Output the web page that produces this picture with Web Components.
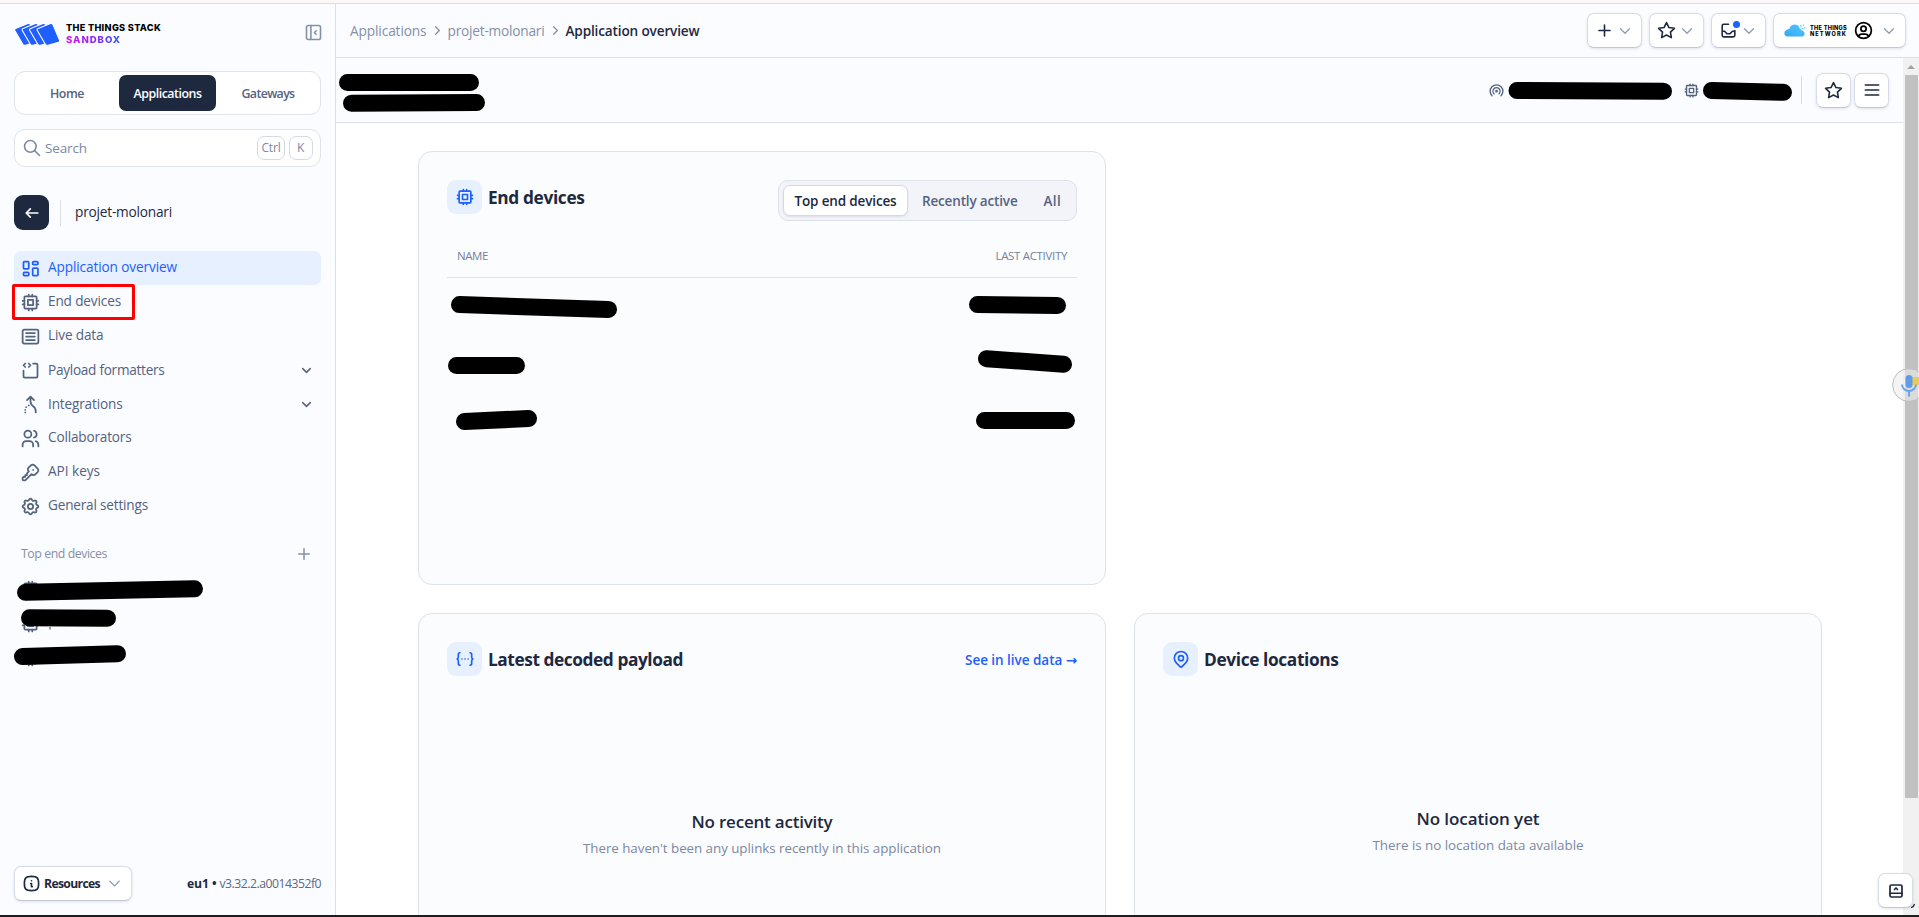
<!DOCTYPE html>
<html lang="en">
<head>
<meta charset="utf-8">
<title>Application overview - The Things Stack</title>
<style>
html,body{margin:0;height:100%;overflow:hidden}
body{font-family:"Open Sans","Noto Sans",sans-serif;color:#1e293f}
</style>
</head>
<body>
<console-app></console-app>
<script>
const define = (name, css, html, setup) => customElements.define(name, class extends HTMLElement {
  connectedCallback() {
    if (this.shadowRoot) return;
    const t = document.createElement('template');
    t.innerHTML = `<style>*{box-sizing:border-box}${css}</style>${typeof html === 'function' ? html(this) : html}`;
    this.attachShadow({ mode: 'open' }).append(t.content.cloneNode(true));
    if (setup) setup(this);
  }
});

const ICONS = {
  cpu: '<rect x="5" y="5" width="14" height="14" rx="1"/><path d="M9 9h6v6h-6zM3 10h2M3 14h2M10 3v2M14 3v2M21 10h-2M21 14h-2M14 21v-2M10 21v-2"/>',
  dashboard: '<rect x="4" y="4" width="6" height="8.500" rx="1"/><rect x="4" y="16.500" width="6" height="3.500" rx="1"/><rect x="14.500" y="11.500" width="6" height="8.500" rx="1"/><rect x="14.500" y="4" width="6" height="3.500" rx="1"/>',
  article: '<rect x="3" y="4" width="18" height="16" rx="2"/><path d="M7 8h10M7 12h10M7 16h10"/>',
  source: '<path d="M15 4h3.500a1.500 1.500 0 0 1 1.500 1.500v13a1.500 1.500 0 0 1 -1.500 1.500h-13a1.500 1.500 0 0 1 -1.500 -1.500v-6.500M6 4l-2 2l2 2M10 8l2 -2l-2 -2"/>',
  merge: '<g transform="matrix(-1 0 0 1 24 0)"><path d="M8 7l4 -4l4 4M18 21v.01M18 18.010v.01M17 15.020v.01M14 13.030v.01M12 3v5.394a6.737 6.737 0 0 1 -3 5.606a6.737 6.737 0 0 0 -3 5.606v1.394"/></g>',
  users: '<circle cx="9" cy="7" r="4"/><path d="M3 21v-2a4 4 0 0 1 4 -4h4a4 4 0 0 1 4 4v2M16 3.130a4 4 0 0 1 0 7.750M21 21v-2a4 4 0 0 0 -3 -3.850"/>',
  key: '<path d="M16.555 3.843l3.602 3.602a2.877 2.877 0 0 1 0 4.069l-2.643 2.643a2.877 2.877 0 0 1 -4.069 0l-.301 -.301l-6.558 6.558a2 2 0 0 1 -1.239 .578h-1.347a1 1 0 0 1 -1 -1v-1.172a2 2 0 0 1 .586 -1.414l.414 -.414h2v-2h2v-2l2.144 -2.144l-.301 -.301a2.877 2.877 0 0 1 0 -4.069l2.643 -2.643a2.877 2.877 0 0 1 4.069 0zM15 9h.01"/>',
  settings: '<path d="M10.325 4.317c.426 -1.756 2.924 -1.756 3.350 0a1.724 1.724 0 0 0 2.573 1.066c1.543 -.94 3.310 .826 2.370 2.370a1.724 1.724 0 0 0 1.065 2.572c1.756 .426 1.756 2.924 0 3.350a1.724 1.724 0 0 0 -1.066 2.573c.94 1.543 -.826 3.310 -2.370 2.370a1.724 1.724 0 0 0 -2.572 1.065c-.426 1.756 -2.924 1.756 -3.350 0a1.724 1.724 0 0 0 -2.573 -1.066c-1.543 .94 -3.310 -.826 -2.370 -2.370a1.724 1.724 0 0 0 -1.065 -2.572c-1.756 -.426 -1.756 -2.924 0 -3.350a1.724 1.724 0 0 0 1.066 -2.573c-.94 -1.543 .826 -3.310 2.370 -2.370c1 .608 2.296 .07 2.572 -1.065z"/><circle cx="12" cy="12" r="3"/>',
  star: '<path d="M12 17.750l-6.172 3.245l1.179 -6.873l-5 -4.867l6.900 -1l3.086 -6.253l3.086 6.253l6.900 1l-5 4.867l1.179 6.873z"/>',
  inbox: '<path d="M12 4h-6a2 2 0 0 0 -2 2v12a2 2 0 0 0 2 2h12a2 2 0 0 0 2 -2v-6M4 13h3l3 3h4l3 -3h3"/>',
  broadcast: '<path d="M18.364 19.364a9 9 0 1 0 -12.728 0M15.536 16.536a5 5 0 1 0 -7.072 0"/><circle cx="12" cy="13" r="1"/>',
  user: '<circle cx="12" cy="12" r="9"/><circle cx="12" cy="10" r="3"/><path d="M6.168 18.849a4 4 0 0 1 3.832 -2.849h4a4 4 0 0 1 3.834 2.855"/>',
  info: '<path d="M12 8.500h.01M11 12h1v4h1M12 3c7.200 0 9 1.800 9 9s-1.800 9-9 9-9-1.800-9-9 1.800-9 9-9z"/>',
  collapse: '<rect x="4" y="4" width="16" height="16" rx="2"/><path d="M9 4v16M15 10l-2 2l2 2"/>',
  expand: '<rect x="4" y="4" width="16" height="16" rx="2"/><path d="M20 15h-16M14 10l-2 -2l-2 2"/>',
  pin: '<circle cx="12" cy="11" r="3"/><path d="M17.657 16.657l-4.243 4.243a2 2 0 0 1 -2.827 0l-4.244 -4.243a8 8 0 1 1 11.314 0z"/>',
  braces: '<path d="M6 4.500a2 2 0 0 0 -2 2v3a2 2.500 0 0 1 -1.500 2.500a2 2.500 0 0 1 1.500 2.500v3a2 2 0 0 0 2 2M18 4.500a2 2 0 0 1 2 2v3a2 2.500 0 0 0 1.500 2.500a2 2.500 0 0 0 -1.500 2.500v3a2 2 0 0 1 -2 2M12 12h.01M8.300 12h.01M15.700 12h.01"/>',
  back: '<path d="M5 12h14M5 12l5 5M5 12l5 -5"/>',
  search: '<circle cx="10" cy="10" r="7"/><path d="M21 21l-6 -6"/>',
  plus: '<path d="M12 5v14M5 12h14"/>',
  menu: '<path d="M4 6h16M4 12h16M4 18h16"/>',
  down: '<path d="M6 9l6 6l6 -6"/>',
  right: '<path d="M9 6l6 6l-6 6"/>'
};

define('ui-icon', ':host{display:block;flex:none}svg{display:block;fill:none;stroke:currentColor;stroke-linecap:round;stroke-linejoin:round}',
  el => `<svg viewBox="0 0 24 24" width="${el.getAttribute('size') || 21}" height="${el.getAttribute('size') || 21}" stroke-width="${el.getAttribute('stroke') || 2}">${ICONS[el.getAttribute('name')]}</svg>`);

/* A single line of text whose tracking is tuned so that it takes `w` pixels. */
define('ui-text', ':host{display:block;flex:none;white-space:nowrap;line-height:20px}span{display:inline-block}', '<span><slot></slot></span>', el => {
  const size = el.getAttribute('size'), w = +el.getAttribute('w'), up = el.getAttribute('up');
  if (size) el.style.fontSize = size + 'px';
  if (el.hasAttribute('weight')) el.style.fontWeight = el.getAttribute('weight');
  if (el.hasAttribute('color')) el.style.color = el.getAttribute('color');
  if (up) { el.style.marginTop = -up + 'px'; el.style.marginBottom = up + 'px'; }
  if (w) {
    const n = el.textContent.length, span = el.shadowRoot.querySelector('span');
    const gap = (w + 1 - span.getBoundingClientRect().width) / n;
    el.style.letterSpacing = gap.toFixed(3) + 'px';
    el.style.width = w + 1 + 'px';
  }
});

define('ui-button', ':host{display:flex;align-items:center;flex:none;height:35px;background:#fff;border:1px solid #d8dce8;border-bottom-color:#c3c8d8;border-radius:7px;box-shadow:0 1px 3px rgba(30,41,63,.12);box-sizing:border-box;color:#1e293f}', '<slot></slot>');

define('brand-logo', ':host{display:flex;align-items:center;gap:6px;height:24px}div{display:grid;font-family:Inter,sans-serif}ui-text{line-height:12px!important}.s{background:linear-gradient(90deg,#e40aff,#7a2cf5 60%,#2a5cff);-webkit-background-clip:text;background-clip:text;color:transparent;width:55px}svg{display:block}',
  `<svg width="46" height="23" viewBox="0 0 46 23"><g fill="#1f5eff" stroke="#fbfcff" stroke-width="1.100">
  <path id="c" d="M2.200 5.200L14 .6Q15.600 0 16.400 1.600L23 17Q23.600 18.700 22 19.400L11.400 22.300Q9.600 22.800 8.800 21.200L.8 7.600Q0 6 2.200 5.200Z"/>
  <use href="#c" x="7.500"/><use href="#c" x="15"/><use href="#c" x="22.500"/></g></svg>
  <div><ui-text size="9.200" weight="800" w="94" color="#000">THE THINGS STACK</ui-text><ui-text class="s" size="9.600" weight="800" w="54">SANDBOX</ui-text></div>`);

define('main-tabs', ':host{display:grid;grid-template-columns:1fr 97px 1fr;height:44px;padding:3px;background:#fff;border:1px solid #dfe3ea;border-radius:11px;box-sizing:border-box;color:#55637f}div{display:flex;align-items:center;justify-content:center;border-radius:7px}.on{background:#1e293f;color:#fff}',
  `<div style="padding-right:3px"><ui-text size="12.400" weight="600" w="33" up="-1">Home</ui-text></div><div class="on"><ui-text size="12.400" weight="600" w="67" up="-1">Applications</ui-text></div><div style="padding-left:3px"><ui-text size="12.400" weight="600" w="52" up="-1">Gateways</ui-text></div>`);

define('search-box', ':host{display:flex;align-items:center;height:38px;padding:0 7px;background:#fff;border:1px solid #dfe3ea;border-radius:11px;box-sizing:border-box;color:#7b88a1;margin-top:14px}.k{display:flex;align-items:center;justify-content:center;height:24px;border:1px solid #d5d9e2;border-radius:7px;margin-left:4px}.c{margin-left:auto}ui-text{margin-left:2px}',
  `<ui-icon name="search" size="20" stroke="1.900"></ui-icon><ui-text style="margin-left:3px" size="13.500" w="41">Search</ui-text><div class="k c" style="width:28px"><ui-text style="margin:0" size="12" w="18">Ctrl</ui-text></div><div class="k" style="width:24px"><ui-text style="margin:0" size="12" w="7">K</ui-text></div>`);

define('nav-item', ':host{display:flex;align-items:center;height:34px;padding:0 7px 0 6px;border-radius:7px;color:#53627f;box-sizing:border-box}:host([active]){background:#e6f0ff;color:#1f5eff}.t{margin-left:7px;flex:1}',
  el => `<ui-icon name="${el.getAttribute('icon')}" size="21"></ui-icon><div class="t"><ui-text size="13.600" up="${el.hasAttribute('more') ? 0 : 1}" w="${el.getAttribute('w')}">${el.getAttribute('label')}</ui-text></div>${el.hasAttribute('more') ? '<ui-icon name="down" size="15" stroke="2.300"></ui-icon>' : ''}`);

define('side-bar', `:host{display:flex;flex-direction:column;width:336px;height:911px;padding:0 14px 14px;background:#fbfcff;border-right:1px solid #dcdfe6;box-sizing:border-box}
  .head{display:flex;justify-content:space-between;align-items:flex-start;padding:18px 0 0;height:67px}.head ui-icon{color:#8390a8;margin:0 -3px 0 0}
  .app{display:flex;align-items:center;height:35px;margin:28px 0 21px}.back{display:grid;place-items:center;width:35px;height:35px;border-radius:9px;background:#1e293f;color:#fff}.sep{width:1px;height:26px;background:#dcdfe6;margin:0 14px 0 11px}
  .sec{display:flex;justify-content:space-between;align-items:center;color:#8390a8;margin:21px 8px 8px 7px;height:20px}
  .foot{display:flex;justify-content:space-between;align-items:center;margin-top:auto}.ver{display:flex;gap:3px;color:#5a6883}`,
  `<div class="head"><brand-logo></brand-logo><ui-icon name="collapse" size="21" stroke="1.800"></ui-icon></div>
  <main-tabs></main-tabs><search-box></search-box>
  <div class="app"><div class="back"><ui-icon name="back" size="20"></ui-icon></div><div class="sep"></div><ui-text size="13.700" w="96" up="1">projet-molonari</ui-text></div>
  <nav-item active icon="dashboard" label="Application overview" w="128"></nav-item>
  <nav-item icon="cpu" label="End devices" w="72"></nav-item>
  <nav-item icon="article" label="Live data" w="54.500"></nav-item>
  <nav-item icon="source" label="Payload formatters" w="115.500" more></nav-item>
  <nav-item icon="merge" label="Integrations" w="73.500" more></nav-item>
  <nav-item icon="users" label="Collaborators" w="82.500"></nav-item>
  <nav-item icon="key" label="API keys" w="51"></nav-item>
  <nav-item icon="settings" label="General settings" w="99"></nav-item>
  <div class="sec"><ui-text size="12.300" w="85">Top end devices</ui-text><ui-icon name="plus" size="18" stroke="2"></ui-icon></div>
  <nav-item icon="cpu" label=""></nav-item><nav-item icon="cpu" label=""></nav-item><nav-item icon="cpu" label=""></nav-item>
  <div class="foot"><ui-button style="width:118px;padding:0 7px 0 7px"><ui-icon name="info" size="19" stroke="2.100"></ui-icon><ui-text style="margin-left:3px" size="12.200" weight="700" w="55">Resources</ui-text><ui-icon name="down" size="19" stroke="1.700" style="margin-left:auto;color:#8d9ab0"></ui-icon></ui-button>
  <div class="ver"><ui-text size="12.200" weight="700" w="28.500" color="#1e293f">eu1 •</ui-text><ui-text size="12.200" w="100.500">v3.32.2.a0014352f0</ui-text></div></div>`);

define('network-logo', ':host{display:flex;align-items:center;gap:4px;font-family:Inter,sans-serif;color:#000}ui-text{line-height:6px!important}svg{display:block}',
  `<svg width="23" height="13" viewBox="0 0 23 13"><defs><linearGradient id="g" x1="0" y1="1" x2="1" y2="0"><stop offset="0" stop-color="#2fa8f5"/><stop offset="1" stop-color="#56c8ff"/></linearGradient></defs><path fill="url(#g)" d="M3.500 12.500a3.500 3.500 0 0 1 0-6.500C4.500 5 5.500 5 6.300 5C7 2 9 .5 12 .5c2.500 0 4 1.200 4.500 3.700C19 5.500 18.500 6.500 20 7c2.500 1.200 2 5-.5 5.500z"/><path d="M17 1.500l1.500 1M18.500 4l2 1M20 .8l.8 .8M21.300 3.500l1 .8" stroke="#56c8ff" stroke-width="1.300"/></svg>
  <div><ui-text size="5.600" weight="800" w="36">THE THINGS</ui-text><ui-text size="5.600" weight="800" w="36">NETWORK</ui-text></div>`);

define('top-bar', `:host{display:flex;align-items:center;justify-content:space-between;height:54px;padding:0 13px 0 14px;background:#fbfcff;border-bottom:1px solid #dcdfe6;box-sizing:border-box}
  .crumbs,.acts{display:flex;align-items:center}.crumbs{color:#8390a8}.crumbs ui-icon{margin:0 3px}.acts{gap:7px}ui-button{padding:0 7px 0 7px;width:55px;justify-content:space-between;position:relative}.dn{color:#8d9ab0}.dot{position:absolute;left:21px;top:7px;width:7px;height:7px;border-radius:50%;background:#1f5eff}`,
  `<div class="crumbs"><ui-text size="13.700" w="75.500">Applications</ui-text><ui-icon name="right" size="15" stroke="2"></ui-icon><ui-text size="13.700" w="96">projet-molonari</ui-text><ui-icon name="right" size="15" stroke="2"></ui-icon><ui-text size="13.600" weight="600" w="133" color="#1e293f">Application overview</ui-text></div>
  <div class="acts"><ui-button><ui-icon name="plus" size="19"></ui-icon><ui-icon class="dn" name="down" size="18" stroke="1.700"></ui-icon></ui-button>
  <ui-button><ui-icon name="star" size="19"></ui-icon><ui-icon class="dn" name="down" size="18" stroke="1.700"></ui-icon></ui-button>
  <ui-button><ui-icon name="inbox" size="19"></ui-icon><span class="dot"></span><ui-icon class="dn" name="down" size="18" stroke="1.700"></ui-icon></ui-button>
  <ui-button style="width:133px;padding:0 7px 0 9px"><network-logo></network-logo><ui-icon name="user" size="21" style="color:#000"></ui-icon><ui-icon class="dn" name="down" size="18" stroke="1.700"></ui-icon></ui-button></div>`);

define('entity-header', `:host{display:flex;align-items:center;justify-content:flex-end;height:65px;padding-right:14px;background:#fbfcff;border-bottom:1px solid #dcdfe6;box-sizing:border-box;color:#53627f}i{width:1px;height:28px;background:#d8dce4;margin:0 14px 0 101px}ui-button{width:35px;justify-content:center}`,
  `<ui-icon name="broadcast" size="17" stroke="1.900" style="margin-right:178px"></ui-icon><ui-icon name="cpu" size="17" stroke="1.900"></ui-icon><i></i><ui-button><ui-icon name="star" size="19"></ui-icon></ui-button><ui-button style="margin-left:3px"><ui-icon name="menu" size="20"></ui-icon></ui-button>`);

define('panel-card', `:host{display:flex;flex-direction:column;width:688px;height:434px;padding:28px;background:#fbfcfe;border:1px solid #dde1e8;border-radius:14px;box-sizing:border-box}
  header{display:flex;justify-content:space-between;align-items:flex-start;height:41px}.h{display:flex;align-items:center;gap:6px}.ic{display:grid;place-items:center;width:35px;height:34px;border-radius:9px;background:#e6f0ff;color:#1f5eff}`,
  el => `<header><div class="h"><div class="ic"><ui-icon name="${el.getAttribute('icon')}" size="20"></ui-icon></div><ui-text size="17.300" weight="700" up="-1" w="${el.getAttribute('w')}">${el.getAttribute('label')}</ui-text></div><slot name="action"></slot></header><slot></slot>`);

define('filter-toggle', ':host{display:flex;align-items:center;width:299px;height:41px;padding:0 4px;background:#f3f4f9;border:1px solid #dde1e8;border-radius:10px;box-sizing:border-box;color:#55637f}.on{display:flex;align-items:center;justify-content:center;width:125px;height:31px;background:#fff;border:1px solid #d5d9e4;border-radius:7px;box-shadow:0 1px 2px rgba(30,41,63,.1)}',
  `<div class="on"><ui-text size="13.500" weight="600" w="101" color="#1e293f">Top end devices</ui-text></div><ui-text style="margin-left:14px" size="13.500" weight="600" w="94.500">Recently active</ui-text><ui-text style="margin-left:26px" size="13.500" weight="600" w="16.500">All</ui-text>`);

define('table-head', ':host{display:flex;justify-content:space-between;align-items:center;height:57px;padding:13px 10px 0;border-bottom:1px solid #dde1e8;box-sizing:border-box;color:#75829b}',
  `<ui-text size="11.500" w="30">NAME</ui-text><ui-text size="11.500" w="70.500">LAST ACTIVITY</ui-text>`);

define('empty-state', ':host{display:flex;flex-direction:column;align-items:center}', el => `<ui-text size="17" weight="600" w="${el.getAttribute('w1')}" style="line-height:24px">${el.getAttribute('label')}</ui-text><ui-text style="margin-top:4px" size="13.400" w="${el.getAttribute('w2')}" color="#7b88a1">${el.getAttribute('note')}</ui-text>`);

define('scroll-bar', ':host{display:flex;flex-direction:column;align-items:center;width:16px;background:#f1f1f1;padding-top:7px;box-sizing:border-box}.a{border:4px solid transparent;border-top:0;border-bottom:4px solid #a3a3a3}.b{width:13px;height:723px;background:#c1c1c1;margin-top:6px}', '<div class="a"></div><div class="b"></div>');

/* Hand-drawn marks laid over the page: the masked values and the highlighted menu entry. */
const MARKS = [[25.5,592.3,194.500,588.8],[29.5,617.8,107.500,618.3],[22.5,656.600,117.500,653.700],[347.500,82.500,470.500,82.500],[351.500,103.300,476.500,102.500],[1517,90.500,1663.500,91.300],[1711.500,90.500,1783.500,92.300],[459.500,304.600,608.500,309.400],[456.500,365.400,516.500,365.400],[464.500,421.500,528.500,418.500],[977.500,304.600,1057.500,305.400],[986.500,358.700,1063.500,364.300],[984.500,420.400,1066.500,420.400]];
define('mark-layer', ':host{position:absolute;inset:0;pointer-events:none}svg{display:block}', `<svg width="1919" height="917"><g stroke="#000" stroke-width="17" stroke-linecap="round">${MARKS.map(([a,b,c,d]) => `<path d="M${a} ${b}L${c} ${d}"/>`).join('')}</g><path d="M50 627v2.500" stroke="#53627f" stroke-width="1.200"/><rect x="13.500" y="285.500" width="120" height="33" fill="none" stroke="#f00" stroke-width="3" rx=".5"/></svg>`);

define('voice-badge', ':host{position:absolute;left:1892px;top:368px;width:27px;height:34px;overflow:hidden}svg{display:block}',
  `<svg width="27" height="34" viewBox="0 0 27 34"><circle cx="17" cy="17" r="16.400" fill="#ececec" fill-opacity=".6" stroke="#bdbdbd"/><rect x="20" y="9" width="7" height="8" fill="#eccb55"/><rect x="13.500" y="7" width="7" height="13" rx="3.500" fill="#5f9be6"/><path d="M10 16.500a7 6.500 0 0 0 14 0M17 23v5.500" fill="none" stroke="#6aa5ea" stroke-width="2"/></svg>`);

define('console-app', `:host{display:flex;flex-direction:column;position:relative;width:1919px;height:917px;background:#fff;overflow:hidden}
  .strip{height:4px;background:#fdf6f8;border-bottom:1px solid #dedee2}.row{display:flex;height:911px;overflow:hidden}.col{flex:1;display:flex;flex-direction:column;min-width:0}.body{display:flex;flex:1;min-height:0}.view{flex:1;min-width:0;overflow:hidden}
  .grid{display:grid;grid-template-columns:688px 688px;gap:28px;padding:28px 0 0 82px}.wide{grid-column:1/-1}
  .end{height:2px;background:#201d20}.log{position:absolute;left:1878px;top:873px;width:35px;justify-content:center}.grip{position:absolute;left:1910px;top:903px}.arrow{font-family:"DejaVu Sans",sans-serif}`,
  `<div class="strip"></div><div class="row"><side-bar></side-bar><div class="col"><top-bar></top-bar><div class="body"><div class="view"><entity-header></entity-header>
  <div class="grid"><panel-card class="wide" icon="cpu" label="End devices" w="95.500"><filter-toggle slot="action"></filter-toggle><table-head></table-head></panel-card>
  <panel-card icon="braces" label="Latest decoded payload" w="194"><ui-text slot="action" size="13.500" weight="600" w="111" up="-8" color="#1f5eff">See in live data <span class="arrow">→</span></ui-text><empty-state style="margin-top:127px" label="No recent activity" note="There haven't been any uplinks recently in this application" w1="140" w2="357"></empty-state></panel-card>
  <panel-card icon="pin" label="Device locations" w="133.500"><empty-state style="margin-top:124px" label="No location yet" note="There is no location data available" w1="122" w2="210"></empty-state></panel-card></div></div><scroll-bar></scroll-bar></div></div></div><div class="end"></div>
  <mark-layer></mark-layer><voice-badge></voice-badge><ui-button class="log"><ui-icon name="expand" size="18" stroke="2.300"></ui-icon></ui-button><svg class="grip" width="6" height="5"><path d="M1 4.500Q3.500 4.500 4.500 1" fill="none" stroke="#222" stroke-width="1.200"/></svg>`);
</script>
</body>
</html>
